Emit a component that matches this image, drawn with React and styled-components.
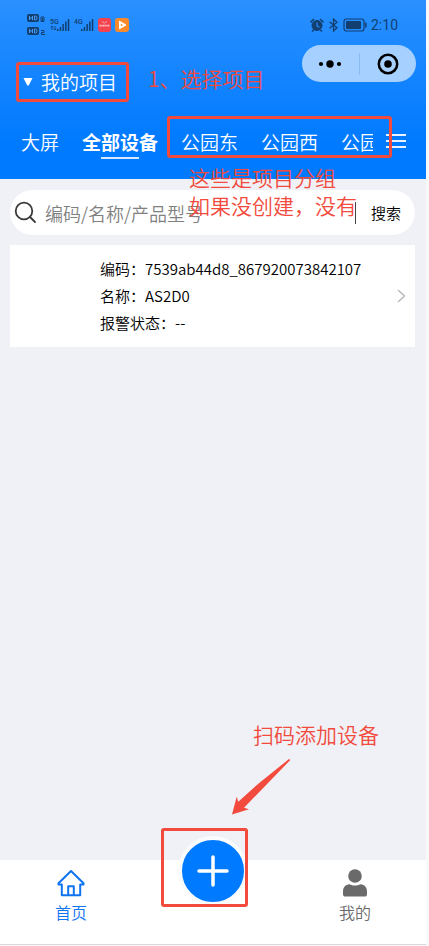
import React from "react";
import styled, { createGlobalStyle, css } from "styled-components";

const GlobalStyle = createGlobalStyle`
  *,
  *::before,
  *::after {
    box-sizing: border-box;
  }

  body {
    margin: 0;
    background: #f8f8f9;
    font-family: "Noto Sans CJK SC", "Noto Sans", sans-serif;
    font-weight: 350;
  }

  button,
  input {
    font-family: inherit;
    font-weight: inherit;
  }
`;

const Page = styled.div`
  display: flex;
  flex-direction: column;
  min-height: 100vh;
  padding: 0 3px 1px 0;
`;

const Header = styled.header`
  background: linear-gradient(180deg, #2a90ff 0%, #007aff 80%);
`;

const StatusBar = styled.div`
  display: flex;
  align-items: center;
  justify-content: space-between;
  height: 45px;
  padding: 5px 28px 0 26px;
`;

const StatusGroup = styled.div`
  display: flex;
  align-items: center;
  gap: 4px;
  color: #123f70;
`;

const Time = styled.span`
  font-family: Roboto, sans-serif;
  font-size: 14px;
  font-weight: 400;
  line-height: 16px;
`;

const TitleRow = styled.div`
  display: flex;
  align-items: flex-start;
  justify-content: space-between;
  padding: 0 10px 0 16px;
`;

const plainButton = css`
  border: 0;
  padding: 0;
  background: none;
  cursor: pointer;
`;

const ProjectButton = styled.button`
  ${plainButton}
  position: relative;
  display: flex;
  align-items: center;
  gap: 8px;
  height: 40px;
  margin-top: 17px;
  padding: 0 12px 0 7px;
  color: #fff;
  font-size: 19px;
  line-height: 28px;
`;

const Capsule = styled.div`
  display: flex;
  align-items: center;
  width: 114px;
  height: 37px;
  border-radius: 19px;
  background: #a6d0ff;
`;

const CapsuleButton = styled.button`
  ${plainButton}
  display: flex;
  flex: 1;
  align-items: center;
  justify-content: center;
  height: 22px;

  & + & {
    border-left: 1px solid #8cbbf0;
  }
`;

const TabBar = styled.nav`
  position: relative;
  display: flex;
  gap: 13px;
  padding: 23px 20px 20px 21px;
`;

const Tabs = styled.div`
  display: flex;
  flex: 1;
  gap: 23px;
  min-width: 0;
  overflow: hidden;
`;

const Tab = styled.button`
  ${plainButton}
  position: relative;
  flex: none;
  color: #fff;
  font-size: 19px;
  font-weight: ${(props) => (props.$active ? 700 : "inherit")};
  line-height: 34px;

  &::after {
    content: "";
    display: ${(props) => (props.$active ? "block" : "none")};
    position: absolute;
    left: 25%;
    right: 25%;
    bottom: 0;
    height: 2px;
    background: #d4e9ff;
  }
`;

const MenuButton = styled.button`
  ${plainButton}
  display: flex;
  align-items: center;
  height: 32px;
`;

const Frame = styled.span`
  position: absolute;
  top: ${(props) => props.$top || 0};
  right: ${(props) => props.$right || 0};
  bottom: ${(props) => props.$bottom || 0};
  left: ${(props) => props.$left || 0};
  border: 3px solid #f24a3d;
  border-radius: 3px;
  pointer-events: none;
`;

const Note = styled.span`
  position: absolute;
  z-index: 2;
  top: ${(props) => props.$top};
  left: ${(props) => props.$left};
  right: ${(props) => props.$right};
  color: #f24a3d;
  font-size: 21px;
  line-height: 28px;
  text-align: left;
  white-space: nowrap;
  pointer-events: none;
`;

const Main = styled.main`
  flex: 1;
  padding: 11px 11px 0 10px;
  background: #eff1f6;
`;

const SearchForm = styled.form`
  display: flex;
  align-items: center;
  height: 45px;
  padding: 0 14px 0 4px;
  border-radius: 23px;
  background: #fff;
`;

const SearchLabel = styled.label`
  display: flex;
`;

const SearchInput = styled.input`
  flex: 1;
  min-width: 0;
  height: 32px;
  border: 0;
  padding: 0 8px;
  outline: 0;
  background: none;
  color: #111;
  font-size: 18px;

  &::placeholder {
    color: #808080;
    opacity: 1;
  }
`;

const SearchButton = styled.button`
  ${plainButton}
  padding-left: 15px;
  border-left: 1px solid #444;
  color: #000;
  font-size: 15px;
  line-height: 22px;
`;

const Device = styled.a`
  display: flex;
  align-items: center;
  justify-content: space-between;
  margin-top: 10px;
  padding: 10px 8px 11px 90px;
  background: #fff;
  color: #000;
  text-decoration: none;
`;

const DeviceInfo = styled.div`
  font-size: 15px;
  line-height: 27px;
`;

const BottomNav = styled.nav`
  position: relative;
  display: grid;
  grid-template-columns: repeat(3, 1fr);
  height: 85px;
  border-bottom: 1px solid #d9d9d9;
  background: #fff;
`;

const NavItem = styled.a`
  display: flex;
  flex-direction: column;
  align-items: center;
  gap: 3px;
  padding-top: 9px;
  color: ${(props) => (props.$active ? "#0f74f0" : "#6a6a6a")};
  font-size: 16px;
  line-height: 24px;
  text-decoration: none;
`;

const AddSlot = styled.div`
  position: relative;
  display: flex;
  justify-content: center;
`;

const AddButton = styled.button`
  ${plainButton}
  display: flex;
  align-items: center;
  justify-content: center;
  width: 70px;
  height: 70px;
  margin-top: -24px;
  border: 4px solid #fafbfd;
  border-radius: 50%;
  background: #007aff;
`;

const Arrow = styled.svg`
  position: absolute;
  top: -102px;
  left: 50%;
  margin-left: 18px;
`;

function HdIcon() {
  return (
    <svg width="20" height="24" viewBox="0 0 20 24" fill="none">
      {[1, 14].map((y, index) => (
        <g key={y}>
          <rect x="1" y={y} width="12" height="8" rx="2" fill="currentColor" />
          <path
            d={`M3.5 ${y + 2}v4M6.5 ${y + 2}v4M3.5 ${y + 4}h3M8.5 ${y + 2}h1q1.5 0 1.5 2t-1.5 2h-1z`}
            stroke="#4a9cf5"
          />
          <path
            d={
              index === 0
                ? `M15 ${y + 3}h3v4.5h-3zM16.5 ${y + 4}v3`
                : `M15 ${y + 3.5}h3v2h-2.5v2H19`
            }
            stroke="currentColor"
          />
        </g>
      ))}
    </svg>
  );
}

function SignalIcon({ label }) {
  return (
    <svg width="20" height="14" viewBox="0 0 20 14" fill="currentColor">
      <text x="0" y="6" fontFamily="Roboto, sans-serif" fontSize="7" fontWeight="500">
        {label}
      </text>
      {label === "5G" && (
        <path
          d="M2 8v4M.7 9.500 2 8l1.300 1.500M5 8v4M3.700 10.500 5 12l1.300-1.500"
          fill="none"
          stroke="currentColor"
          strokeWidth=".8"
        />
      )}
      <path d="M7 11h1.500v2H7zM9.700 9h1.500v4H9.700zM12.400 6h1.500v7h-1.500zM15.100 3.500h1.500V13h-1.500zM17.800 1h1.500v12h-1.500z" />
    </svg>
  );
}

function HuaweiIcon() {
  return (
    <svg width="13" height="14" viewBox="0 0 13 14">
      <rect width="13" height="14" rx="3" fill="#f4434f" />
      <path d="M4.500 3q0 2 2 2t2-2" fill="none" stroke="#ffb0b0" strokeWidth=".8" />
      <path d="M1.500 7.600h10" stroke="#ffc4c4" strokeWidth="1.600" strokeDasharray="1.300 .4" />
    </svg>
  );
}

function VideoIcon() {
  return (
    <svg width="14" height="14" viewBox="0 0 14 14">
      <rect width="14" height="14" rx="3" fill="#f98a2c" />
      <path d="M4.500 3.200v7.600L11 7z" fill="#fff" stroke="#fff" strokeLinejoin="round" />
      <path d="M5.800 5.800v2.400L8 7z" fill="#f98a2c" />
    </svg>
  );
}

function AlarmIcon() {
  return (
    <svg width="14" height="14" viewBox="0 0 14 14" fill="none" stroke="currentColor" strokeLinecap="round">
      <circle cx="7" cy="7.500" r="5" fill="currentColor" />
      <path d="M1 3.800 3.500 1.500M13 3.800 10.500 1.500M3.500 12l-1 1M10.500 12l1 1" strokeWidth="1.600" />
      <path d="M7 4.800v3l2 1.300" stroke="#2588f8" strokeWidth="1.200" />
    </svg>
  );
}

function BluetoothIcon() {
  return (
    <svg width="11" height="14" viewBox="0 0 11 14" fill="none" stroke="currentColor" strokeWidth="1.300">
      <path d="m1.500 3.800 7.500 6L5.500 13V1L9 4.200l-7.500 6" />
    </svg>
  );
}

function BatteryIcon() {
  return (
    <svg width="24" height="14" viewBox="0 0 24 14" fill="none">
      <rect x="1" y="1" width="20" height="12" rx="2.500" stroke="currentColor" strokeWidth="1.200" />
      <rect x="3" y="3" width="15" height="8" rx="1" fill="currentColor" />
      <path d="M22.800 4.500v5" stroke="currentColor" strokeWidth="1.500" />
    </svg>
  );
}

function HomeIcon() {
  return (
    <svg width="28" height="28" viewBox="0 0 28 28" fill="none" stroke="currentColor" strokeWidth="2" strokeLinejoin="round">
      <path d="M14 2 1.500 14.300v1.200h3.300v10.700h18.400V15.500h3.300v-1.200z" />
      <path d="M11.200 26v-8.700h5.600V26" />
    </svg>
  );
}

function UserIcon() {
  return (
    <svg width="28" height="28" viewBox="0 0 28 28" fill="currentColor">
      <circle cx="14" cy="7" r="6.800" />
      <path d="M8.500 15.200C11.800 17 16.200 17 19.500 15.200 23.600 15.400 26 18.500 26 22.500V25q0 2.600-2.600 2.600H4.600Q2 27.600 2 25v-2.500C2 18.500 4.400 15.400 8.500 15.200z" />
    </svg>
  );
}

const tabs = ["大屏", "全部设备", "公园东", "公园西", "公园"];

function App() {
  return (
    <>
      <GlobalStyle />
      <Page>
        <Header>
          <StatusBar>
            <StatusGroup>
              <HdIcon />
              <SignalIcon label="5G" />
              <SignalIcon label="4G" />
              <HuaweiIcon />
              <VideoIcon />
            </StatusGroup>
            <StatusGroup>
              <AlarmIcon />
              <BluetoothIcon />
              <BatteryIcon />
              <Time>2:10</Time>
            </StatusGroup>
          </StatusBar>
          <TitleRow>
            <ProjectButton type="button">
              <svg width="10" height="8" viewBox="0 0 10 8" fill="#fff">
                <path d="M.5 0h9L5.700 7.500H4.300z" />
              </svg>
              我的项目
              <Frame />
              <Note $top="2px" $left="132px">
                1、选择项目
              </Note>
            </ProjectButton>
            <Capsule>
              <CapsuleButton type="button" aria-label="更多">
                <svg width="24" height="8" viewBox="0 0 24 8">
                  <circle cx="3" cy="4" r="2.100" />
                  <circle cx="12" cy="4" r="3.700" />
                  <circle cx="21" cy="4" r="2.100" />
                </svg>
              </CapsuleButton>
              <CapsuleButton type="button" aria-label="关闭">
                <svg width="22" height="22" viewBox="0 0 22 22">
                  <circle cx="11" cy="11" r="9.200" fill="none" stroke="#000" strokeWidth="2.500" />
                  <circle cx="11" cy="11" r="3.800" />
                </svg>
              </CapsuleButton>
            </Capsule>
          </TitleRow>
          <TabBar>
            <Tabs>
              {tabs.map((tab) => (
                <Tab key={tab} type="button" $active={tab === "全部设备"}>
                  {tab}
                </Tab>
              ))}
            </Tabs>
            <MenuButton type="button" aria-label="分组">
              <svg width="20" height="14" viewBox="0 0 20 14" stroke="#e6f2ff" strokeWidth="2">
                <path d="M0 1h20M0 7h20M0 13h20" />
              </svg>
            </MenuButton>
            <Frame $top="14px" $right="34px" $bottom="21px" $left="167px" />
            <Note $top="61px" $left="189px">
              这些是项目分组
              <br />
              如果没创建，没有
            </Note>
          </TabBar>
        </Header>
        <Main>
          <SearchForm onSubmit={(event) => event.preventDefault()}>
            <SearchLabel htmlFor="search" aria-label="搜索设备">
              <svg width="23" height="23" viewBox="0 0 23 23" fill="none" stroke="#3b3b3b" strokeWidth="1.800" strokeLinecap="round">
                <circle cx="10" cy="10" r="8.300" />
                <path d="m16 16 5 5" />
              </svg>
            </SearchLabel>
            <SearchInput id="search" placeholder="编码/名称/产品型号" />
            <SearchButton type="submit">搜索</SearchButton>
          </SearchForm>
          <Device href="#device">
            <DeviceInfo>
              <div>编码：7539ab44d8_867920073842107</div>
              <div>名称：AS2D0</div>
              <div>报警状态：--</div>
            </DeviceInfo>
            <svg width="12" height="14" viewBox="0 0 12 14" fill="none" stroke="#b5b5b5" strokeWidth="1.300">
              <path d="m3 1 6.500 6L3 13" />
            </svg>
          </Device>
        </Main>
        <BottomNav>
          <NavItem href="#home" $active>
            <HomeIcon />
            首页
          </NavItem>
          <AddSlot>
            <AddButton type="button" aria-label="添加设备">
              <svg width="32" height="32" viewBox="0 0 32 32" stroke="#fff" strokeWidth="3.500" strokeLinecap="round">
                <path d="M16 2v28M2 16h28" />
              </svg>
            </AddButton>
            <Frame $top="-32px" $right="36px" $bottom="37px" $left="19px" />
          </AddSlot>
          <NavItem href="#mine">
            <UserIcon />
            我的
          </NavItem>
          <Note $top="-140px" $right="47px">
            扫码添加设备
          </Note>
          <Arrow width="60" height="58" viewBox="0 0 60 58" fill="#f24a3d">
            <path d="M58 1 59.300 2 13 49.700 18 51.300 1 56.500 5.700 38.700 7.300 43.700 27 26z" />
          </Arrow>
        </BottomNav>
      </Page>
    </>
  );
}

export default App;
